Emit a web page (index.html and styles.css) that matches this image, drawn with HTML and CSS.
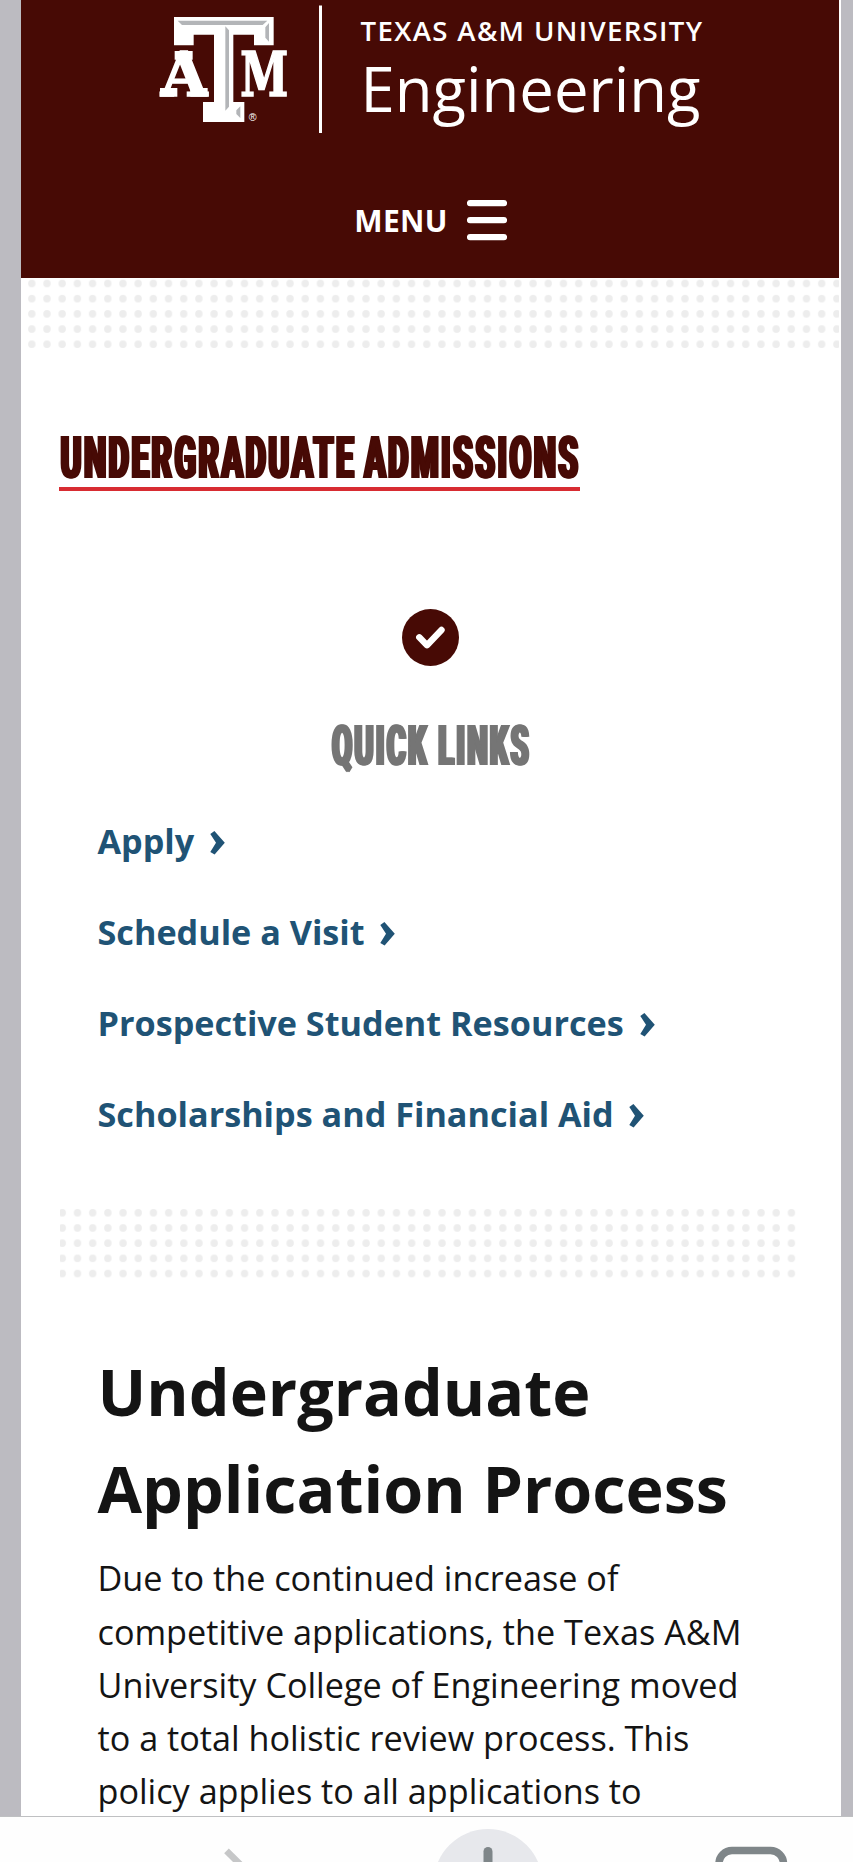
FILE: index.html
```html
<!DOCTYPE html>
<html lang="en">
<head>
<meta charset="utf-8">
<title>Undergraduate Admissions | Texas A&amp;M University Engineering</title>
<link rel="stylesheet" href="styles.css">
</head>
<body>
<div class="viewport">
  <div class="page">
    <header class="header">
      <svg class="brand" viewBox="0 0 580 140" role="img" aria-label="Texas A&amp;M University Engineering">
        <g transform="scale(.33333)">
          <g class="mark-letter">
            <text x="62" y="288" textLength="140" lengthAdjust="spacingAndGlyphs">A</text>
            <text x="301" y="288" textLength="144" lengthAdjust="spacingAndGlyphs">M</text>
          </g>
          <path fill="#fff" d="M104 153H158V179H104ZM60 264H112V290H60ZM151 264H203V290H151Z"/>
          <path fill="#fff" d="M102 51H401V136H342V104H280V306H313V366H189V306H222V104H161V136H102Z"/>
          <path fill="#b3b5b8" d="M113 62L126 75H368L382 62ZM387 69V125L376 113V82ZM256 79L267 91V320L256 332ZM301 319V354L289 342V331Z"/>
          <text class="registered" x="326" y="364">®</text>
        </g>
        <rect x="179" y="5.5" width="3" height="127.5" fill="#fff"/>
        <text class="brand-top" x="220.6" y="41.2" textLength="341.5">TEXAS A&amp;M UNIVERSITY</text>
        <text class="brand-name" x="220.5" y="111.5" textLength="340" lengthAdjust="spacingAndGlyphs">Engineering</text>
      </svg>
      <button class="menu" type="button">
        <span>MENU</span>
        <svg class="burger" viewBox="0 0 40 41"><path d="M3 3.2H37M3 20.2H37M3 37.2H37"/></svg>
      </button>
    </header>

    <svg class="dots dots-top" width="818" height="74">
      <defs>
        <pattern id="d1" x="3.2" y="-2.1" width="15.19" height="15.19" patternUnits="userSpaceOnUse"><circle cx="7.6" cy="7.6" r="3.7" fill="#ededed"/></pattern>
      </defs>
      <rect width="818" height="73" fill="url(#d1)"/>
    </svg>

    <main class="main">
      <h2 class="title">
        <svg width="521" height="46"><text x="2" y="44.5" textLength="520" lengthAdjust="spacingAndGlyphs">UNDERGRADUATE ADMISSIONS</text></svg>
      </h2>

      <section class="quick">
        <svg class="check" viewBox="0 0 57 57"><circle cx="28.5" cy="28.5" r="28.5"/><path d="M17.3 28.3L25 36.2L39.5 21"/></svg>
        <h3 class="quick-title">
          <svg width="202" height="56"><text x="3.5" y="41.5" textLength="199" lengthAdjust="spacingAndGlyphs">QUICK LINKS</text></svg>
        </h3>
        <ul class="links">
          <li><a>Apply</a><svg class="chev" viewBox="0 0 15 24"><path d="M4.4 0L.3 3L6 11.7L.3 21L4.6 23.4L14.8 11.7Z"/></svg></li>
          <li><a>Schedule a Visit</a><svg class="chev" viewBox="0 0 15 24"><path d="M4.4 0L.3 3L6 11.7L.3 21L4.6 23.4L14.8 11.7Z"/></svg></li>
          <li><a>Prospective Student Resources</a><svg class="chev" viewBox="0 0 15 24"><path d="M4.4 0L.3 3L6 11.7L.3 21L4.6 23.4L14.8 11.7Z"/></svg></li>
          <li><a>Scholarships and Financial Aid</a><svg class="chev" viewBox="0 0 15 24"><path d="M4.4 0L.3 3L6 11.7L.3 21L4.6 23.4L14.8 11.7Z"/></svg></li>
        </ul>
      </section>

      <svg class="dots dots-mid" width="738" height="74">
        <defs>
          <pattern id="d2" x="-4.3" y="-1.8" width="15.19" height="15.19" patternUnits="userSpaceOnUse"><circle cx="7.6" cy="7.6" r="3.7" fill="#ededed"/></pattern>
        </defs>
        <rect x="1" width="737" height="73" fill="url(#d2)"/>
      </svg>

      <article class="article">
        <h1>Undergraduate<br>Application Process</h1>
        <p>Due to the continued increase of<br>competitive applications, the Texas A&amp;M<br>University College of Engineering moved<br>to a total holistic review process. This<br>policy applies to all applications to</p>
      </article>
    </main>
  </div>
</div>
<nav class="toolbar">
  <svg width="853" height="45">
    <path d="M226.5 33.8L250 57.3" stroke="#c6c7c8" stroke-width="6.6" fill="none"/>
    <circle cx="488" cy="66.5" r="54.5" fill="#e7e8ec"/>
    <path d="M488 34.5V60" stroke="#7f8689" stroke-width="9" stroke-linecap="round"/>
    <rect x="719" y="33.5" width="64.5" height="64" rx="13" fill="none" stroke="#7f8689" stroke-width="7.5"/>
  </svg>
</nav>
</body>
</html>
```
FILE: styles.css
```css
* { box-sizing: border-box; }
html, body { margin: 0; height: 1862px; overflow: hidden; }
body {
  display: flex;
  flex-direction: column;
  background: #fff;
  color: #141414;
  font-family: "Open Sans", "Noto Sans", sans-serif;
}
svg { display: block; }

.viewport { height: 1816px; overflow: hidden; background: #bcbbc1; padding: 0 12px 0 21px; }
.page { height: 1816px; background: #fff; }

.header {
  display: flex;
  flex-direction: column;
  align-items: center;
  width: 818px;
  height: 277.5px;
  background: #470a05;
}
.brand { width: 580px; height: 140px; overflow: visible; }
.mark-letter text {
  font: bold 183px "DejaVu Serif", serif;
  fill: #fff;
  stroke: #fff;
  stroke-width: 5px;
}
.registered { font: 32px "Liberation Sans", Arial, sans-serif; fill: #fff; }
.brand-top { font-size: 27.6px; font-weight: 560; fill: #fff; }
.brand-name { font-size: 61.5px; font-weight: 400; fill: #fff; }

.menu {
  display: flex;
  align-items: center;
  gap: 19px;
  margin: 59px 0 0 1px;
  padding: 0;
  border: 0;
  background: none;
  color: #fff;
  font: 700 30px/42px "Open Sans", sans-serif;
  letter-spacing: .3px;
}
.menu span { padding-top: 1px; }
.burger { width: 40px; height: 41px; }
.burger path { fill: none; stroke: #fff; stroke-width: 6.2px; stroke-linecap: round; }

.main { display: flex; flex-direction: column; padding: 0 41px 0 38px; }

.title {
  align-self: flex-start;
  margin: 81.5px 0 0;
  padding-bottom: 8px;
  border-bottom: 4px solid #d82c32;
}
.title text, .quick-title text { font-family: Roboto, sans-serif; font-weight: 900; }
.title svg, .quick-title svg { overflow: visible; filter: drop-shadow(1px 0 0 currentColor) drop-shadow(-1.8px 0 0 currentColor); }
.title svg { color: #470a05; }
.title text { font-size: 60px; letter-spacing: 4.5px; word-spacing: -4px; fill: #470a05; }

.quick { display: flex; flex-direction: column; align-items: center; margin-top: 117.5px; }
.check { width: 57px; height: 57px; margin-left: 1px; }
.check circle { fill: #470a05; }
.check path { fill: none; stroke: #fff; stroke-width: 6.4px; stroke-linecap: round; stroke-linejoin: round; }
.quick-title { margin: 57px 0 0 1px; color: #757575; }
.quick-title text { font-size: 55px; letter-spacing: 4px; fill: #757575; }

.links { align-self: stretch; margin: 16.3px 0 0; padding: 0 0 0 38.5px; list-style: none; }
.links li {
  display: flex;
  align-items: center;
  gap: 15.8px;
  height: 91.2px;
  color: #205375;
  font-size: 34.2px;
  font-weight: 700;
  white-space: nowrap;
}
.chev { width: 15px; height: 24px; margin-top: 5px; fill: #205375; }

.dots-mid { margin-top: 47.5px; }

.article { margin-top: 61.8px; padding-left: 38.5px; white-space: nowrap; }
.article h1 { margin: 0; font-size: 64.6px; line-height: 97.5px; font-weight: 700; }
.article p { margin: 13.5px 0 0; font-size: 34.2px; line-height: 53.2px; }

.toolbar { height: 46px; border-top: 1px solid #bfc0c2; background: #fefefe; overflow: hidden; }
```
